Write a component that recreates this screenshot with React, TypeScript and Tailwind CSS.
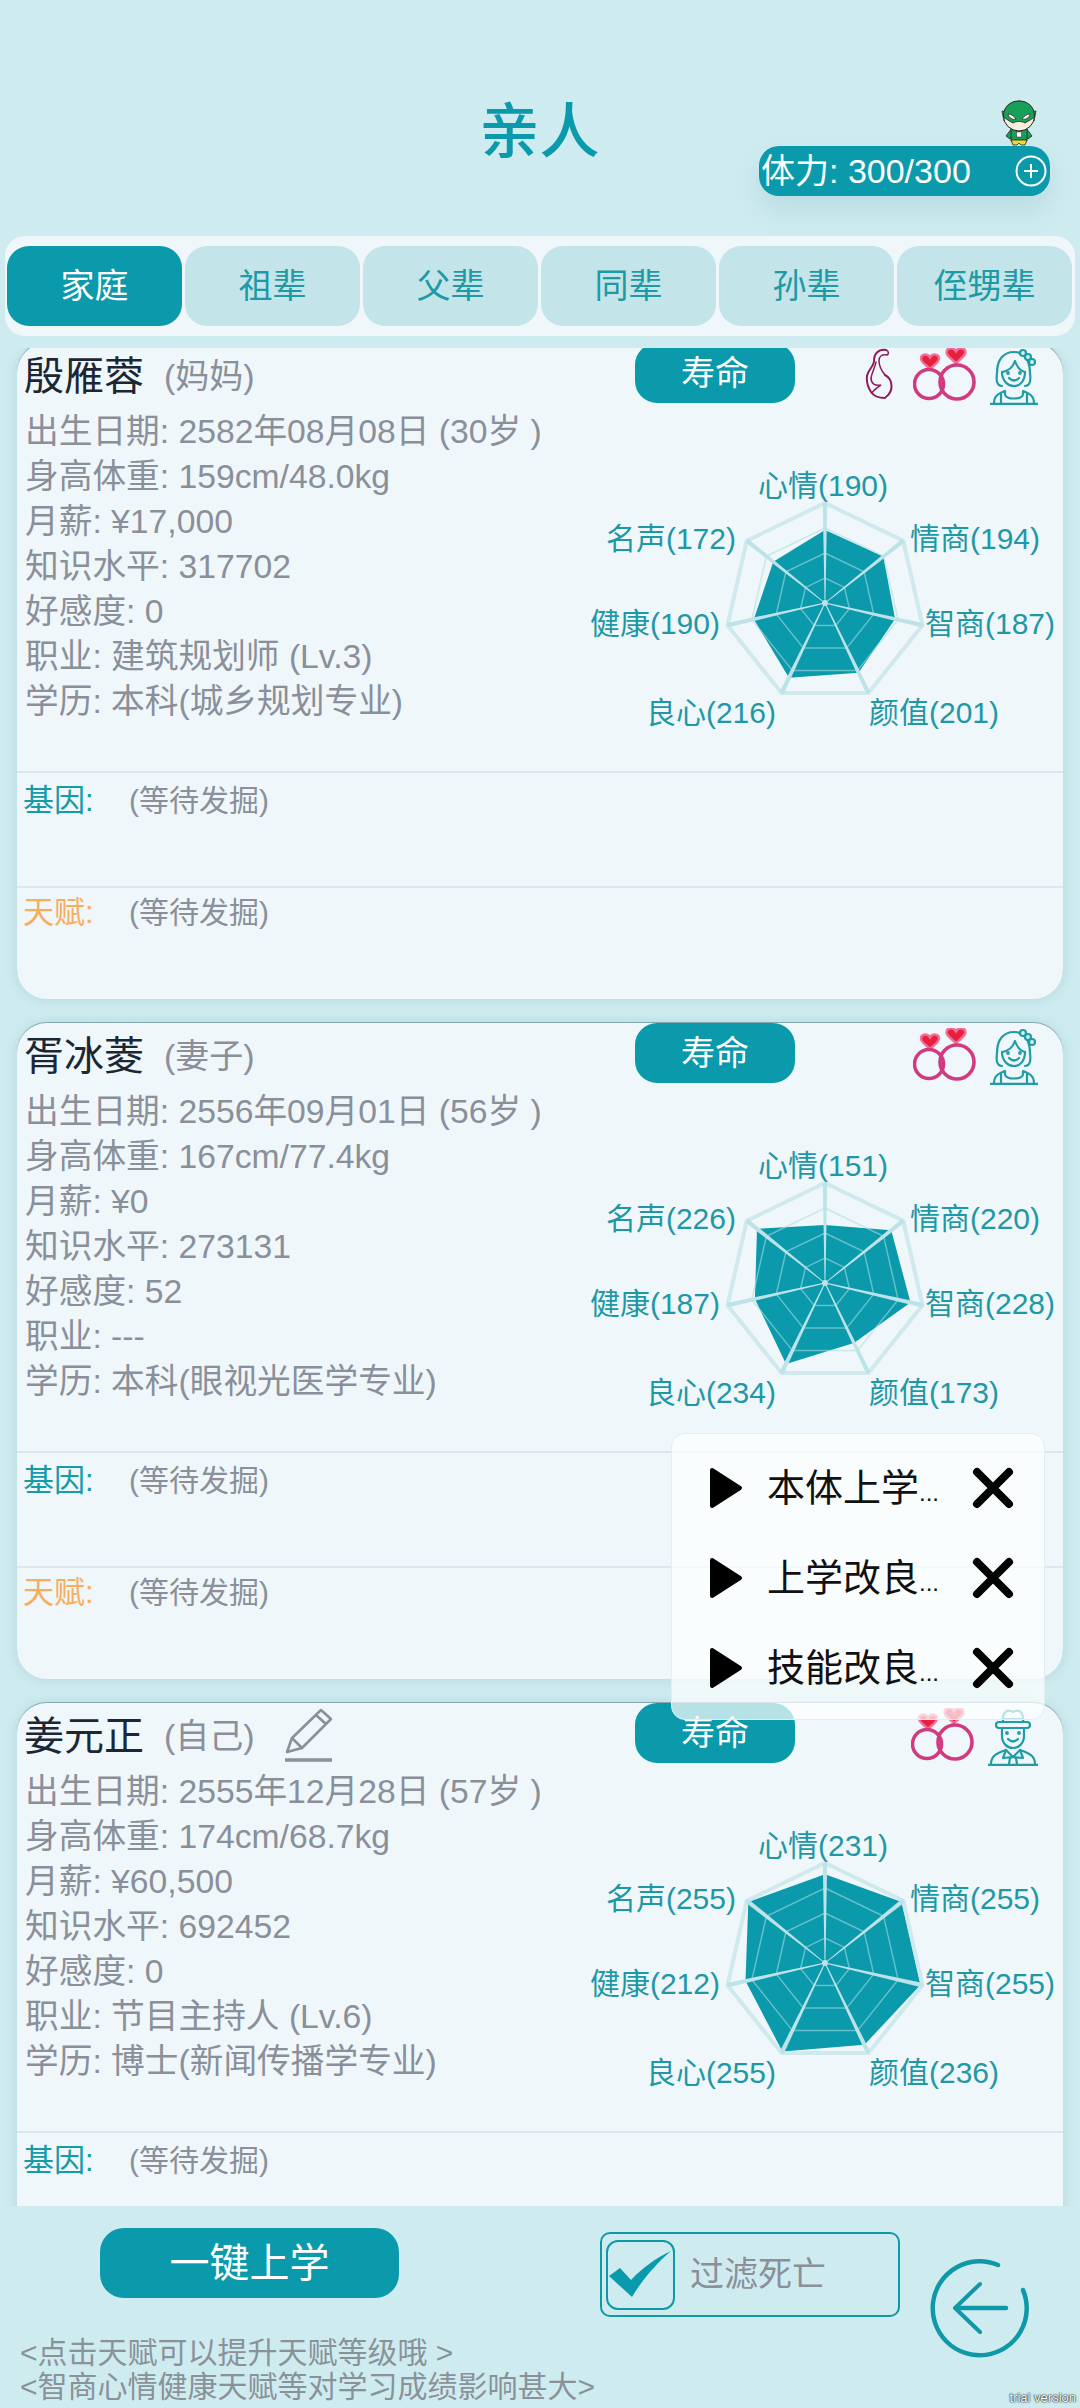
const TEAL = "#0a9aac";
const FONT = '"Liberation Sans","Noto Sans CJK SC",sans-serif';

type Person = {
  name: string; rel: string; pencil?: boolean; pregnant?: boolean; male?: boolean; cutOff?: boolean;
  lines: string[]; stats: number[];
};

const people: Person[] = [
  { name: "殷雁蓉", rel: "(妈妈)", pregnant: true,
    lines: ["出生日期: 2582年08月08日 (30岁 )", "身高体重: 159cm/48.0kg", "月薪: ¥17,000", "知识水平: 317702", "好感度: 0", "职业: 建筑规划师 (Lv.3)", "学历: 本科(城乡规划专业)"],
    stats: [190, 194, 187, 201, 216, 190, 172] },
  { name: "胥冰菱", rel: "(妻子)",
    lines: ["出生日期: 2556年09月01日 (56岁 )", "身高体重: 167cm/77.4kg", "月薪: ¥0", "知识水平: 273131", "好感度: 52", "职业: ---", "学历: 本科(眼视光医学专业)"],
    stats: [151, 220, 228, 173, 234, 187, 226] },
  { name: "姜元正", rel: "(自己)", pencil: true, male: true, cutOff: true,
    lines: ["出生日期: 2555年12月28日 (57岁 )", "身高体重: 174cm/68.7kg", "月薪: ¥60,500", "知识水平: 692452", "好感度: 0", "职业: 节目主持人 (Lv.6)", "学历: 博士(新闻传播学专业)"],
    stats: [231, 255, 255, 236, 255, 212, 255] },
];

const labelNames = ["心情", "情商", "智商", "颜值", "良心", "健康", "名声"];
const labelPos: { x: number; y: number; a: "middle" | "start" | "end" }[] = [
  { x: -2, y: -118, a: "middle" },
  { x: 85, y: -65, a: "start" },
  { x: 100, y: 20, a: "start" },
  { x: 44, y: 109, a: "start" },
  { x: -49, y: 109, a: "end" },
  { x: -105, y: 20, a: "end" },
  { x: -89, y: -65, a: "end" },
];

function pt(cx: number, cy: number, r: number, i: number) {
  const a = (i * 2 * Math.PI) / 7;
  return [cx + r * Math.sin(a), cy - r * Math.cos(a)];
}
function poly(cx: number, cy: number, rs: (i: number) => number) {
  return [0, 1, 2, 3, 4, 5, 6].map((i) => pt(cx, cy, rs(i), i).map((v) => v.toFixed(1)).join(",")).join(" ");
}
function spoke(cx: number, cy: number, i: number) {
  const a = (i * 2 * Math.PI) / 7;
  const [x, y] = pt(cx, cy, 100, i);
  const nx = Math.cos(a), ny = Math.sin(a);
  const w0 = 0.4, w1 = 2.2;
  return [
    [cx + nx * w0, cy + ny * w0],
    [x + nx * w1, y + ny * w1],
    [x - nx * w1, y - ny * w1],
    [cx - nx * w0, cy - ny * w0],
  ].map((p) => p.map((v) => v.toFixed(1)).join(",")).join(" ");
}

function Radar({ stats }: { stats: number[] }) {
  const cx = 265, cy = 200;
  return (
    <svg width="503" height="368" viewBox="0 0 503 368" className="block">
      <polygon points={poly(cx, cy, () => 75)} fill="none" stroke="#d3ecf0" strokeWidth="1.5" />
      <polygon points={poly(cx, cy, (i) => (stats[i] / 260) * 100)} fill={TEAL} />
      {[25, 50, 75].map((r) => (
        <polygon key={r} points={poly(cx, cy, () => r)} fill="none" stroke="#bfe5ea" strokeOpacity="0.5" strokeWidth="1.5" />
      ))}
      <polygon points={poly(cx, cy, () => 100)} fill="none" stroke="#cfe9ed" strokeWidth="4" />
      {[0, 1, 2, 3, 4, 5, 6].map((i) => (
        <polygon key={i} points={spoke(cx, cy, i)} fill="#bde3e8" />
      ))}
      <circle cx={cx} cy={cy} r="3" fill="#bde3e8" />
      {labelPos.map((l, i) => (
        <text key={i} x={cx + l.x} y={cy + l.y + 11} textAnchor={l.a} fontSize="30" fill="#1f98a6" fontFamily={FONT}>
          {labelNames[i]}({stats[i]})
        </text>
      ))}
    </svg>
  );
}

function heart(x: number, y: number, s: number) {
  const d = "M0 7 C-2 4 -9 1 -9 -3.5 C-9 -8 -2.5 -9 0 -4.5 C2.5 -9 9 -8 9 -3.5 C9 1 2 4 0 7Z";
  return <path d={d} transform={`translate(${x} ${y}) scale(${s})`} fill="#e8203c" stroke="#f0709c" strokeWidth="2.4" />;
}

function Rings() {
  return (
    <svg width="64" height="54" viewBox="0 0 64 54" className="flex-none">
      {heart(17, 14, 1)}
      {heart(43, 8, 1.05)}
      <circle cx="16" cy="36" r="14.5" fill="none" stroke="#d23a80" strokeWidth="3.6" />
      <circle cx="44" cy="34" r="17" fill="none" stroke="#d23a80" strokeWidth="3.6" />
    </svg>
  );
}

function Pregnant() {
  return (
    <svg width="28" height="52" viewBox="0 0 28 52" fill="none" stroke="#8e1c5c" strokeWidth="1.5" className="flex-none" strokeLinecap="round">
      <path d="M21 2 C13 1 9 6 9 13 C9 18 3 22 2 28 C1 35 3 39 6 44 C8 47 12 50 20 50" strokeWidth="2" />
      <path d="M21 2 C24 3 24 6 22 7 C17 6 14 8 14 13 C14 18 16 22 20 27" />
      <path d="M20 27 C28 31 29 43 21 49" strokeWidth="2" />
      <path d="M6 30 C6 36 10 38 16 37 C12 40 8 42 7 45" />
      <path d="M11 14 C10 20 7 24 6 30" />
    </svg>
  );
}

function Woman() {
  return (
    <svg width="48" height="57" viewBox="0 0 48 57" fill="none" stroke="#1f9ca6" strokeWidth="2.2" className="flex-none" strokeLinecap="round" strokeLinejoin="round">
      <path d="M12 38 C7 38 6 33 7 25 C7 11 14 4 24 4 C33 4 40 11 40 25 C41 33 40 38 35 38" />
      <path d="M12 24 C18 23 23 19 25 13 C27 19 31 23 35 24" />
      <path d="M12 24 C12 33 18 38 24 38 C30 38 35 33 35 24" />
      <path d="M19 30 Q24 35 29 30" />
      <circle cx="18" cy="25" r="0.8" /><circle cx="30" cy="25" r="0.8" />
      <circle cx="33" cy="5" r="3" fill="#d8f0f3" /><circle cx="38" cy="9" r="3" fill="#d8f0f3" /><circle cx="42" cy="14" r="3" fill="#d8f0f3" />
      <path d="M4 55 C4 47 10 45 15 43 V46 C15 52 33 52 33 46 V43 C38 45 44 47 44 55" />
      <path d="M11 46 V55 M37 46 V55" />
      <path d="M0 56 H48" strokeWidth="2.4" />
    </svg>
  );
}

function Man() {
  return (
    <svg width="50" height="58" viewBox="0 0 50 58" fill="none" stroke="#1f9ca6" strokeWidth="2.2" className="flex-none" strokeLinecap="round" strokeLinejoin="round">
      <path d="M15 14 C14 3 20 1 25 4 C30 1 36 3 35 14" />
      <path d="M15 11 H35" />
      <rect x="8" y="14" width="34" height="6" rx="3" />
      <path d="M14 20 V28 C14 35 19 40 25 40 C31 40 36 35 36 28 V20" />
      <path d="M20 31 Q25 36 30 31" />
      <circle cx="19" cy="25" r="0.8" /><circle cx="31" cy="25" r="0.8" />
      <path d="M3 56 C3 47 10 45 18 42 L25 49 L32 42 C40 45 47 47 47 56" />
      <path d="M18 42 L15 50 L25 49 L35 50 L32 42" />
      <path d="M22 50 L25 48 L28 50 L29 56 M21 56 L22 50" />
      <path d="M0 57 H50" strokeWidth="2.4" />
    </svg>
  );
}

function Pencil() {
  return (
    <svg width="48" height="54" viewBox="0 0 48 54" fill="none" stroke="#8a8f99" strokeWidth="2.6" className="flex-none ml-[30px] -mt-[2px]" strokeLinejoin="round">
      <path d="M2 44 L7 30 L36 2 L46 11 L17 40 Z" />
      <path d="M7 30 L17 40 M31 7 L41 16" />
      <path d="M0 52 H47" strokeWidth="3.4" />
    </svg>
  );
}

function Hero() {
  return (
    <svg width="38" height="47" viewBox="0 0 38 47" className="block">
      <path d="M8 12 L2 11 L4 21 L9 22 Z M30 12 L36 11 L34 21 L29 22 Z" fill="#7fbf57" stroke="#222" strokeWidth="0.8" />
      <path d="M12 28 L6 36 L10 39 L13 34 M26 28 L32 36 L28 39 L25 34" fill="#18a058" stroke="#222" strokeWidth="0.8" />
      <path d="M11 27 H27 L27 41 H11 Z" fill="#18a058" stroke="#222" strokeWidth="0.8" />
      <rect x="16.5" y="32" width="5" height="5" fill="#fff" stroke="#222" strokeWidth="0.5" />
      <path d="M11 40 H27 L25 45 H21 L19 43 L17 45 H13 Z" fill="#efdc3a" stroke="#222" strokeWidth="0.8" />
      <ellipse cx="19" cy="16" rx="15.5" ry="15" fill="#fbeedd" stroke="#222" strokeWidth="1" />
      <path d="M3.6 17 C3 7 10 1 19 1 C28 1 35 7 34.4 17 C33 18 29 21 25 23 C22 21 16 21 13 23 C9 21 5 18 3.6 17 Z" fill="#18a058" stroke="#222" strokeWidth="0.8" />
      <path d="M8 14 C11 14 14 16 16 19 C12 20 9 18 8 14 Z M30 14 C27 14 24 16 22 19 C26 20 29 18 30 14 Z" fill="#fff" stroke="#222" strokeWidth="0.7" />
    </svg>
  );
}

function Card({ p }: { p: Person }) {
  return (
    <div className="w-[1046px] h-[656px] flex-none flex flex-col bg-[#eff7fa] rounded-[30px] shadow-[0_0_14px_rgba(0,70,90,0.13),0_-1px_0_rgba(90,125,135,0.55)]">
      <div className="h-[428px] flex-none flex">
        <div className="w-[543px] flex-none">
          <div className="h-[66px] flex items-center pl-[7px]">
            <span className="text-[40px] leading-[50px] text-[#1c2733]">{p.name}</span>
            <span className="text-[34px] leading-[50px] text-[#8a8f99] ml-[20px]">{p.rel}</span>
            {p.pencil && <Pencil />}
          </div>
          <div className="pl-[8px]">
            {p.lines.map((l) => (
              <div key={l} className="text-[33.7px] leading-[45px] text-[#8a8f99] whitespace-nowrap">{l}</div>
            ))}
          </div>
        </div>
        <div className="w-[503px] flex-none">
          <div className="h-[60px] relative flex items-start pl-[75px]">
            <div className="w-[160px] h-[60px] rounded-[22px] bg-[#0a9aac] text-white text-[34px] flex items-center justify-center">寿命</div>
            <div className="ml-auto mr-[25px] mt-[5px] h-[60px] flex items-start gap-[13px]">
              {p.pregnant && <div className="mr-[7px]"><Pregnant /></div>}
              <Rings />
              {p.male ? <Man /> : <Woman />}
            </div>
          </div>
          <Radar stats={p.stats} />
        </div>
      </div>
      <div className="h-[115px] flex-none border-t-2 border-[#dce8ec] flex items-start pl-[6px] pt-[10px]">
        <span className="w-[106px] text-[31px] leading-[36px] text-[#159ca8]">基因:</span>
        <span className="text-[30px] leading-[36px] text-[#8a8f99]">(等待发掘)</span>
      </div>
      {!p.cutOff && (
        <div className="flex-1 border-t-2 border-[#dce8ec] flex items-start pl-[6px] pt-[7px]">
          <span className="w-[106px] text-[31px] leading-[36px] text-[#f8ad5c]">天赋:</span>
          <span className="text-[30px] leading-[36px] text-[#8a8f99]">(等待发掘)</span>
        </div>
      )}
    </div>
  );
}

function Play() {
  return (
    <svg width="34" height="42" viewBox="0 0 34 42" className="flex-none">
      <path d="M3 3 L31 21 L3 39 Z" fill="#000" stroke="#000" strokeWidth="4" strokeLinejoin="round" />
    </svg>
  );
}
function Cross() {
  return (
    <svg width="42" height="42" viewBox="0 0 42 42" className="flex-none">
      <path d="M5 5 L37 37 M37 5 L5 37" stroke="#000" strokeWidth="8" strokeLinecap="round" />
    </svg>
  );
}

const tabs = ["家庭", "祖辈", "父辈", "同辈", "孙辈", "侄甥辈"];

export default function App() {
  return (
    <div className="relative w-[1080px] h-[2408px] overflow-hidden bg-[#ceecf0]" style={{ fontFamily: FONT }}>
      {/* Header */}
      <div className="relative h-[236px] flex justify-center">
        <h1 className="mt-[97px] text-[60px] leading-[72px] font-medium text-[#0a9aac] -ml-[1px]">亲人</h1>
        <div className="absolute left-[1000px] top-[100px]"><Hero /></div>
        <div className="absolute left-[759px] top-[146px] w-[291px] h-[50px] rounded-[20px] bg-[#0a9aac] flex items-center pl-[2px] pr-[3px] shadow-[0_14px_30px_rgba(0,70,90,0.10)]">
          <span className="text-[34px] text-white whitespace-nowrap">体力: 300/300</span>
          <svg width="32" height="32" viewBox="0 0 32 32" className="ml-auto">
            <circle cx="16" cy="16" r="14.5" fill="none" stroke="#fff" strokeWidth="2" />
            <path d="M16 9 V23 M9 16 H23" stroke="#fff" strokeWidth="2" />
          </svg>
        </div>
      </div>

      {/* Tabs */}
      <div className="mx-[5px] h-[100px] rounded-[20px] bg-[#eff7fa] flex items-center gap-[3px] px-[2px]">
        {tabs.map((t, i) => (
          <div
            key={t}
            className={
              i === 0
                ? "w-[175px] flex-none h-[80px] rounded-[22px] bg-[#0a9aac] text-white text-[34px] flex items-center justify-center"
                : "w-[175px] flex-none h-[80px] rounded-[22px] bg-[#c3e4e9] text-[#1d9aa6] text-[34px] flex items-center justify-center"
            }
          >
            {t}
          </div>
        ))}
      </div>

      {/* Cards */}
      <div className="mt-[12px] h-[1858px] overflow-hidden">
        <div className="-mt-[5px] pl-[17px] flex flex-col gap-[24px]">
          {people.map((p) => <Card key={p.name} p={p} />)}
        </div>
      </div>

      {/* Footer */}
      <div className="flex items-start">
        <div className="w-[580px] flex-none pl-[20px]">
          <div className="ml-[80px] mt-[22px] w-[299px] h-[70px] rounded-[24px] bg-[#0a9aac] text-white text-[40px] flex items-center justify-center">一键上学</div>
          <div className="mt-[38px] text-[30px] leading-[34px] text-[#8a9299] whitespace-nowrap">&lt;点击天赋可以提升天赋等级哦 &gt;</div>
          <div className="text-[30px] leading-[34px] text-[#8a9299] whitespace-nowrap">&lt;智商心情健康天赋等对学习成绩影响甚大&gt;</div>
        </div>
        <div className="ml-[20px] mt-[26px] w-[300px] h-[85px] flex-none border-2 border-[#0f98a8] rounded-[10px] flex items-center pl-[4px]">
          <div className="w-[69px] h-[70px] border-2 border-[#0f98a8] rounded-[12px] flex items-center justify-center">
            <svg width="65" height="66" viewBox="2 2 65 66">
              <path d="M3 36 L14 28 L25 40 C36 28 50 18 65 11 C50 24 36 40 26 57 Z" fill="#0a9aac" />
            </svg>
          </div>
          <span className="ml-[15px] text-[34px] text-[#8a8f99]">过滤死亡</span>
        </div>
        <svg width="100" height="100" viewBox="0 0 100 100" fill="none" stroke="#0f98a8" strokeLinecap="round" strokeLinejoin="round" className="ml-[30px] mt-[52px] flex-none">
          <path d="M68 7 A47 47 0 1 0 93 32" strokeWidth="4.5" />
          <path d="M27 50 H76" strokeWidth="4.5" />
          <path d="M50 26 L25 50 L50 74" strokeWidth="4" />
        </svg>
      </div>

      {/* Floating task menu */}
      <div className="absolute left-[671px] top-[1433px] w-[374px] h-[287px] rounded-[14px] bg-white/70 border border-[#e4eef1] pt-[33px] flex flex-col gap-[48px] pl-[37px]">
        {["本体上学", "上学改良", "技能改良"].map((t) => (
          <div key={t} className="h-[42px] flex items-center">
            <Play />
            <span className="ml-[24px] w-[205px] text-[38px] text-[#111] whitespace-nowrap">{t}<span className="text-[24px]">...</span></span>
            <Cross />
          </div>
        ))}
      </div>

      <div className="absolute right-[4px] bottom-[3px] text-[13px] leading-[15px] text-white [text-shadow:0_0_1px_#000,0_0_2px_#000]">trial version</div>
    </div>
  );
}
